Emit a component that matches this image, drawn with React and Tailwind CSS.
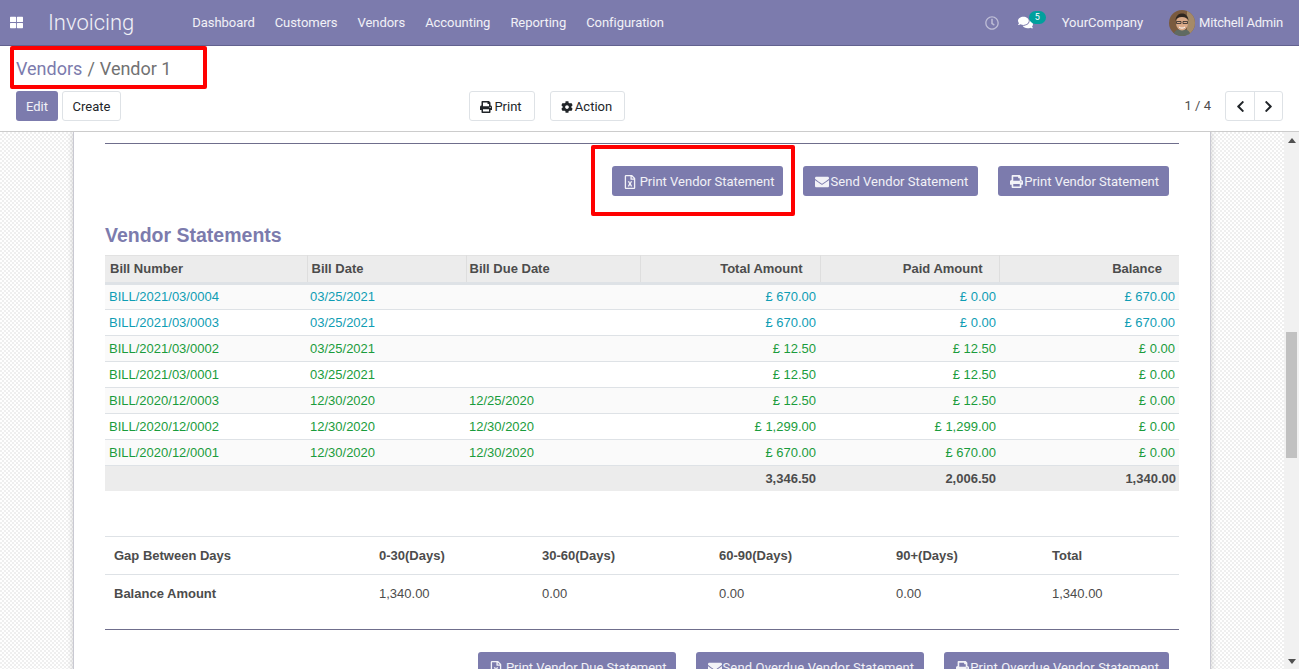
import React from "react";
import {
  FaThLarge,
  FaPrint,
  FaCog,
  FaRegClock,
  FaComments,
  FaChevronLeft,
  FaChevronRight,
  FaEnvelope,
  FaRegFileExcel,
} from "react-icons/fa";

const menus = ["Dashboard", "Customers", "Vendors", "Accounting", "Reporting", "Configuration"];

const bills = [
  ["BILL/2021/03/0004", "03/25/2021", "", "£ 670.00", "£ 0.00", "£ 670.00", "text-[#0f9db4]"],
  ["BILL/2021/03/0003", "03/25/2021", "", "£ 670.00", "£ 0.00", "£ 670.00", "text-[#0f9db4]"],
  ["BILL/2021/03/0002", "03/25/2021", "", "£ 12.50", "£ 12.50", "£ 0.00", "text-[#1a9c3c]"],
  ["BILL/2021/03/0001", "03/25/2021", "", "£ 12.50", "£ 12.50", "£ 0.00", "text-[#1a9c3c]"],
  ["BILL/2020/12/0003", "12/30/2020", "12/25/2020", "£ 12.50", "£ 12.50", "£ 0.00", "text-[#1a9c3c]"],
  ["BILL/2020/12/0002", "12/30/2020", "12/30/2020", "£ 1,299.00", "£ 1,299.00", "£ 0.00", "text-[#1a9c3c]"],
  ["BILL/2020/12/0001", "12/30/2020", "12/30/2020", "£ 670.00", "£ 670.00", "£ 0.00", "text-[#1a9c3c]"],
];

const Avatar = () => (
  <svg width="26" height="26" viewBox="0 0 26 26" className="rounded-full">
    <rect width="26" height="26" fill="#7a5a3e" />
    <rect x="18" width="8" height="26" fill="#a58a68" />
    <path d="M4 26c1-6 5-7 9-7s8 1 9 7z" fill="#5f6a62" />
    <ellipse cx="13" cy="13" rx="6" ry="7.5" fill="#d9a988" />
    <path d="M6.5 11c0-5 3-7.5 6.500-7.500s6.500 2.500 6.500 7.500c-1-3-3-4-6.500-4s-5.500 1-6.500 4z" fill="#2f2620" />
    <path d="M7.500 11.500h4.500v2h-4.500zM14 11.500h4.500v2h-4.500z" fill="none" stroke="#2b2b2b" strokeWidth="0.8" />
    <path d="M10 17c2 1.500 4 1.500 6 0" fill="none" stroke="#fff" strokeWidth="1" />
  </svg>
);

const ActionButton = ({ icon, className = "pl-[12px] pr-[10px]", children }) => (
  <button className={`h-[30px] pt-[1px] flex items-center bg-[#7c7bad] text-white/90 text-[13px] rounded-[3px] whitespace-nowrap ${className}`}>
    {icon}
    {children}
  </button>
);

const LightButton = ({ className = "", children }) => (
  <button className={`h-[30px] pt-[1px] flex items-center justify-center bg-white border border-[#dee2e6] rounded-[3px] text-[13px] text-[#212529] ${className}`}>
    {children}
  </button>
);

const Navbar = () => (
  <header className="h-[46px] shrink-0 flex items-center bg-[#7c7bad] border-b border-[#62618f] text-white/90 text-[13px]">
    <FaThLarge className="ml-[10px] text-white" size={13} />
    <span className="ml-[25px] mr-[58px] text-[22px] font-light leading-none">Invoicing</span>
    <nav className="flex gap-[20px] tracking-[-0.05px]">
      {menus.map((m) => (
        <span key={m}>{m}</span>
      ))}
    </nav>
    <div className="ml-auto flex items-center mr-[16px]">
      <FaRegClock size={14} className="text-white/50" />
      <div className="relative ml-[19px] mr-[29px]">
        <FaComments size={15} className="text-white" />
        <span className="absolute -top-[4px] left-[11px] w-[17px] h-[13px] rounded-full bg-[#00a09d] text-white text-[9px] leading-[13px] text-center">5</span>
      </div>
      <span className="mr-[26px]">YourCompany</span>
      <Avatar />
      <span className="ml-[4px] tracking-[-0.2px]">Mitchell Admin</span>
    </div>
  </header>
);

const ControlPanel = () => (
  <div className="h-[86px] shrink-0 bg-white border-b border-[#cccccc] px-[16px]">
    <div className="h-[45px] pt-[11px] text-[18px] leading-[24px] text-[#727272]">
      <span className="text-[#7c7bad]">Vendors</span>
      <span className="mx-[5px]">/</span>
      <span>Vendor 1</span>
    </div>
    <div className="flex items-center">
      <button className="h-[30px] pt-[1px] w-[42px] bg-[#7c7bad] text-white/90 text-[13px] rounded-[3px]">Edit</button>
      <LightButton className="ml-[4px] w-[59px]">Create</LightButton>
      <LightButton className="ml-[348px] w-[66px] gap-[2px] pr-[2px]">
        <FaPrint size={12} />
        Print
      </LightButton>
      <LightButton className="ml-[15px] w-[75px] gap-[2px] pr-[2px]">
        <FaCog size={12} />
        Action
      </LightButton>
      <span className="ml-auto mr-[14px] text-[13px] text-[#4c4c4c]">1 / 4</span>
      <div className="flex h-[30px] border border-[#dee2e6] rounded-[3px] text-[#212529]">
        <span className="w-[29px] flex items-center justify-center border-r border-[#dee2e6]">
          <FaChevronLeft size={13} />
        </span>
        <span className="w-[27px] flex items-center justify-center">
          <FaChevronRight size={13} />
        </span>
      </div>
    </div>
  </div>
);

const BillTable = () => (
  <table className="w-[1074px] table-fixed border-collapse font-['Liberation_Sans',Arial,sans-serif] text-[13px]">
    <colgroup>
      <col className="w-[202px]" />
      <col className="w-[159px]" />
      <col className="w-[174px]" />
      <col className="w-[180px]" />
      <col className="w-[179px]" />
      <col className="w-[180px]" />
    </colgroup>
    <thead>
      <tr className="h-[28px] bg-[#ececec] text-[#4c4c4c] border-t border-[#e2e2e2] border-b-[3px] border-b-[#dee2e6]">
        <th className="pl-[5px] text-left font-bold">Bill Number</th>
        <th className="pl-[4px] text-left font-bold border-l border-[#dedede]">Bill Date</th>
        <th className="pl-[3px] text-left font-bold border-l border-[#dedede]">Bill Due Date</th>
        <th className="pr-[17px] text-right font-bold border-l border-[#dedede]">Total Amount</th>
        <th className="pr-[16px] text-right font-bold border-l border-[#dedede]">Paid Amount</th>
        <th className="pr-[17px] text-right font-bold border-l border-[#dedede]">Balance</th>
      </tr>
    </thead>
    <tbody>
      {bills.map((b, i) => (
        <tr key={b[0]} className={`h-[26px] border-b border-[#dee2e6] ${b[6]} ${i % 2 === 0 ? "bg-[#fafafa]" : "bg-white"}`}>
          <td className="pl-[4px]">{b[0]}</td>
          <td className="pl-[3px]">{b[1]}</td>
          <td className="pl-[3px]">{b[2]}</td>
          <td className="pr-[4px] text-right">{b[3]}</td>
          <td className="pr-[3px] text-right">{b[4]}</td>
          <td className="pr-[4px] text-right">{b[5]}</td>
        </tr>
      ))}
      <tr className="h-[25px] bg-[#ececec] font-bold text-[#4c4c4c]">
        <td colSpan={3}></td>
        <td className="pr-[4px] text-right">3,346.50</td>
        <td className="pr-[3px] text-right">2,006.50</td>
        <td className="pr-[3px] text-right">1,340.00</td>
      </tr>
    </tbody>
  </table>
);

const GapTable = () => (
  <table className="mt-[45px] w-[1074px] table-fixed border-collapse font-['Liberation_Sans',Arial,sans-serif] text-[13px] text-[#4c4c4c]">
    <colgroup>
      <col className="w-[265px]" />
      <col className="w-[163px]" />
      <col className="w-[177px]" />
      <col className="w-[177px]" />
      <col className="w-[156px]" />
      <col className="w-[136px]" />
    </colgroup>
    <tbody>
      <tr className="h-[38px] border-t border-b border-[#dee2e6] font-bold">
        <td className="pl-[9px] pt-[1px]">Gap Between Days</td>
        <td className="pl-[9px] pt-[1px]">0-30(Days)</td>
        <td className="pl-[9px] pt-[1px]">30-60(Days)</td>
        <td className="pl-[9px] pt-[1px]">60-90(Days)</td>
        <td className="pl-[9px] pt-[1px]">90+(Days)</td>
        <td className="pl-[9px] pt-[1px]">Total</td>
      </tr>
      <tr className="h-[38px]">
        <td className="pl-[9px] font-bold">Balance Amount</td>
        <td className="pl-[9px]">1,340.00</td>
        <td className="pl-[9px]">0.00</td>
        <td className="pl-[9px]">0.00</td>
        <td className="pl-[9px]">0.00</td>
        <td className="pl-[9px]">1,340.00</td>
      </tr>
    </tbody>
  </table>
);

const Sheet = () => (
  <div className="w-[1138px] mx-auto min-h-[800px] bg-white border-x border-[#c9c9d2] shadow-[0_0_6px_rgba(0,0,0,0.18)] px-[31px] pt-[11px]">
    <div className="border-t border-[#6f6e8c]" />
    <div className="mt-[22px] flex justify-end gap-[20px] pr-[10px]">
      <ActionButton className="pl-[11px] pr-[9px]" icon={<FaRegFileExcel size={14} className="mr-[3px]" />}>Print Vendor Statement</ActionButton>
      <ActionButton className="pl-[12px] pr-[10px] tracking-[0.05px]" icon={<FaEnvelope size={14} className="mr-[1px]" />}>Send Vendor Statement</ActionButton>
      <ActionButton icon={<FaPrint size={13} className="mr-[1px]" />}>Print Vendor Statement</ActionButton>
    </div>
    <h2 className="mt-[28px] mb-[9px] font-['Liberation_Sans',Arial,sans-serif] text-[19.5px] leading-[22px] font-bold text-[#7c7bad]">
      Vendor Statements
    </h2>
    <BillTable />
    <GapTable />
    <div className="mt-[17px] border-t border-[#6f6e8c]" />
    <div className="mt-[22px] flex justify-end gap-[20px] pr-[10px]">
      <ActionButton className="pl-[11px] pr-[9px]" icon={<FaRegFileExcel size={14} className="mr-[3px]" />}>Print Vendor Due Statement</ActionButton>
      <ActionButton className="pl-[12px] pr-[10px] tracking-[0.14px]" icon={<FaEnvelope size={14} className="mr-[1px]" />}>Send Overdue Vendor Statement</ActionButton>
      <ActionButton className="pl-[12px] pr-[10px] tracking-[0.1px]" icon={<FaPrint size={13} className="mr-[1px]" />}>Print Overdue Vendor Statement</ActionButton>
    </div>
  </div>
);

const Scrollbar = () => (
  <div className="w-[15px] shrink-0 bg-[#f1f1f1] flex flex-col items-center relative">
    <span className="mt-[6px] w-0 h-0 border-x-[4px] border-x-transparent border-b-[5px] border-b-[#505050]" />
    <div className="mt-[189px] w-[11px] h-[126px] bg-[#c1c1c1]" />
    <span className="mt-auto mb-[5px] w-0 h-0 border-x-[4px] border-x-transparent border-t-[5px] border-t-[#505050]" />
  </div>
);

export default function App() {
  return (
    <div className="relative h-screen flex flex-col overflow-hidden bg-white font-['Roboto','Liberation_Sans',sans-serif]">
      <Navbar />
      <ControlPanel />
      <div className="flex-1 min-h-0 flex">
        <div className="flex-1 min-w-0 overflow-hidden bg-[repeating-conic-gradient(#efefef_0_25%,#ffffff_0_50%)] bg-[length:4px_4px]">
          <Sheet />
        </div>
        <Scrollbar />
      </div>
      {/* red highlight boxes drawn over the screenshot */}
      <div className="absolute left-[10px] top-[46px] w-[197px] h-[43px] border-[4px] border-[#ff0000] rounded-[2px]" />
      <div className="absolute left-[591px] top-[145px] w-[204px] h-[71px] border-[4px] border-[#ff0000] rounded-[2px]" />
    </div>
  );
}
